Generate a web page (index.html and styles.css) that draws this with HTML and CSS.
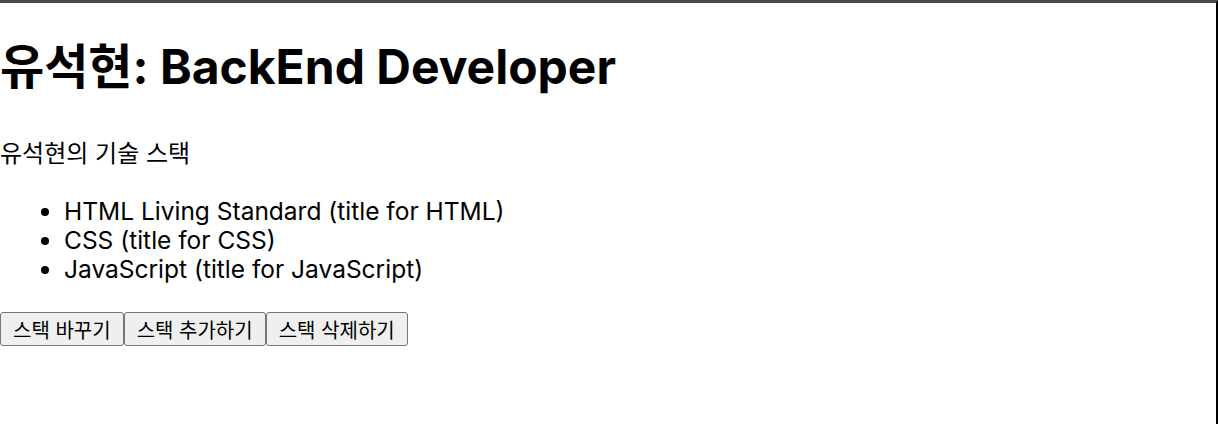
FILE: index.html
```html
<!DOCTYPE html>
<html lang="ko">
<head>
<meta charset="utf-8">
<title>유석현: BackEnd Developer</title>
<link rel="stylesheet" href="styles.css">
</head>
<body>
<div class="frame">
  <h1 class="title">유석현: BackEnd Developer</h1>
  <p class="subtitle">유석현의 기술 스택</p>
  <ul class="stack">
    <li>HTML Living Standard (title for HTML)</li>
    <li>CSS (title for CSS)</li>
    <li>JavaScript (title for JavaScript)</li>
  </ul>
  <div class="actions">
    <button class="btn" type="button">스택 바꾸기</button>
    <button class="btn" type="button">스택 추가하기</button>
    <button class="btn" type="button">스택 삭제하기</button>
  </div>
</div>
</body>
</html>
```

FILE: styles.css
```css
html, body {
  margin: 0;
  padding: 0;
  background: #ffffff;
}

body {
  font-family: Inter, "Noto Sans CJK KR", sans-serif;
  color: #000000;
  overflow: hidden;
}

.frame {
  box-sizing: border-box;
  height: 424px;
  border-top: 3px solid #4a4a4a;
  border-right: 2px solid #000000;
}

.title {
  margin: 36px 0 0;
  font-size: 48px;
  line-height: 56px;
  font-weight: 700;
}

.subtitle {
  margin: 44px 0 0;
  font-size: 24px;
  line-height: 30px;
}

.stack {
  margin: 28px 0 0;
  padding-left: 64px;
  font-size: 24.5px;
  line-height: 29px;
}

.actions {
  display: flex;
  margin-top: 28px;
}

.btn {
  box-sizing: border-box;
  height: 34px;
  margin: 0;
  padding: 0 12px;
  font-family: Inter, "Noto Sans CJK KR", sans-serif;
  font-size: 20px;
  color: #000000;
  background: #efefef;
  border: 1px solid #767676;
  border-radius: 3px;
}
```
